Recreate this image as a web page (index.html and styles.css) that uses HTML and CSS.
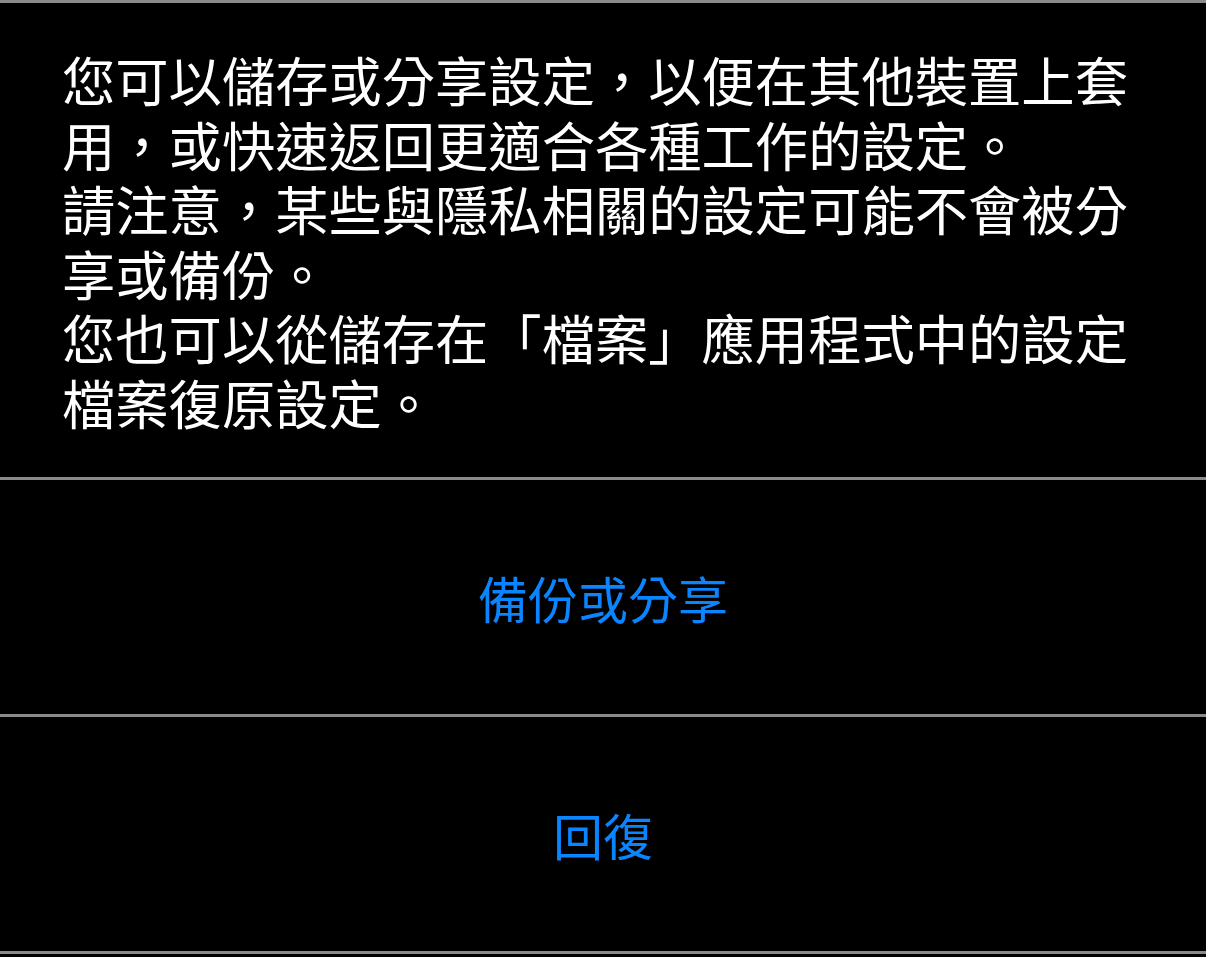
FILE: index.html
```html
<!DOCTYPE html>
<html lang="zh-Hant">
<head>
<meta charset="utf-8">
<title>備份或分享</title>
<link rel="stylesheet" href="styles.css">
</head>
<body>
<div class="sheet">
  <div class="desc">
    <p class="para">您可以儲存或分享設定，以便在其他裝置上套用，或快速返回更適合各種工作的設定。</p>
    <p class="para">請注意，某些與隱私相關的設定可能不會被分享或備份。</p>
    <p class="para">您也可以從儲存在「檔案」應用程式中的設定檔案復原設定。</p>
  </div>
  <div class="action">備份或分享</div>
  <div class="action last">回復</div>
</div>
</body>
</html>
```

FILE: styles.css
```css
html, body {
  margin: 0;
  padding: 0;
  background: #000;
}
body {
  font-family: "Noto Sans CJK TC", "Noto Sans CJK SC", "Noto Sans", sans-serif;
  width: 1206px;
  height: 957px;
  overflow: hidden;
}
.sheet {
  display: flex;
  flex-direction: column;
}
.desc {
  border-top: 3px solid #8a8a8a;
  padding: 44px 62px 43px;
  color: #fff;
  font-size: 53.3px;
  line-height: 64.5px;
}
.para {
  margin: 0;
}
.action {
  border-top: 3px solid #8a8a8a;
  height: 234px;
  display: flex;
  align-items: center;
  justify-content: center;
  color: #0a84ff;
  font-size: 50px;
}
.action.last {
  border-bottom: 3px solid #8a8a8a;
}
```
